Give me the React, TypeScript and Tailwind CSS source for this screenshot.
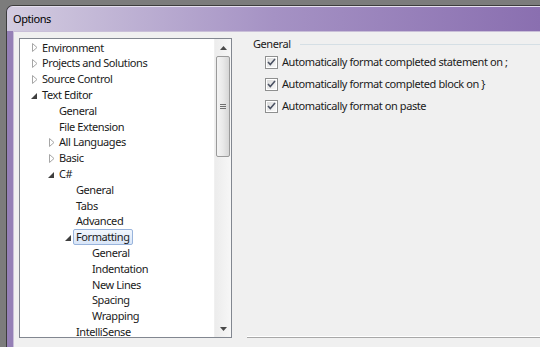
import React from 'react';

type Row = { level: number; label: string; state?: 'open' | 'closed'; selected?: boolean };

const rows: Row[] = [
  { level: 0, label: 'Environment', state: 'closed' },
  { level: 0, label: 'Projects and Solutions', state: 'closed' },
  { level: 0, label: 'Source Control', state: 'closed' },
  { level: 0, label: 'Text Editor', state: 'open' },
  { level: 1, label: 'General' },
  { level: 1, label: 'File Extension' },
  { level: 1, label: 'All Languages', state: 'closed' },
  { level: 1, label: 'Basic', state: 'closed' },
  { level: 1, label: 'C#', state: 'open' },
  { level: 2, label: 'General' },
  { level: 2, label: 'Tabs' },
  { level: 2, label: 'Advanced' },
  { level: 2, label: 'Formatting', state: 'open', selected: true },
  { level: 3, label: 'General' },
  { level: 3, label: 'Indentation' },
  { level: 3, label: 'New Lines' },
  { level: 3, label: 'Spacing' },
  { level: 3, label: 'Wrapping' },
  { level: 2, label: 'IntelliSense' },
];

// arrow column start for each depth
const indent = ['pl-[11px]', 'pl-[28px]', 'pl-[45px]', 'pl-[61px]'];

const options = [
  'Automatically format completed statement on ;',
  'Automatically format completed block on }',
  'Automatically format on paste',
];

function Expander({ state }: { state?: 'open' | 'closed' }) {
  if (state === 'closed') {
    return (
      <svg width="6" height="9" viewBox="0 0 6 9" className="ml-[1px]">
        <path d="M0.5 0.5 L5 4.5 L0.5 8.5 Z" fill="none" stroke="#a6a6a6" strokeWidth="1" />
      </svg>
    );
  }
  if (state === 'open') {
    return (
      <svg width="6" height="6" viewBox="0 0 6 6" className="mt-[1px]">
        <path d="M6 0 L6 6 L0 6 Z" fill="#3f3f3f" />
      </svg>
    );
  }
  return null;
}

function CheckBox() {
  return (
    <div className="w-[13px] h-[13px] border border-[#8e8f8f] bg-white p-px shrink-0">
      <div className="w-full h-full bg-gradient-to-br from-[#dcdcdc] to-[#f8f8f8] flex items-center justify-center">
        <svg width="9" height="8" viewBox="0 0 9 8">
          <path d="M1 4 L3.3 6.5 L8 1" fill="none" stroke="#4b5263" strokeWidth="1.6" />
        </svg>
      </div>
    </div>
  );
}

function ScrollBar() {
  return (
    <div className="w-[17px] shrink-0 flex flex-col bg-gradient-to-r from-[#ececec] to-[#f7f7f7] border-l border-[#f0f0f0]">
      <div className="h-[17px] flex items-center justify-center">
        <svg width="7" height="4" viewBox="0 0 7 4">
          <path d="M0 4 L3.5 0 L7 4 Z" fill="#4a4a4a" />
        </svg>
      </div>
      <div className="flex-1 flex flex-col">
        <div className="h-[101px] mx-[1px] rounded-[2px] border border-[#9a9a9a] bg-gradient-to-r from-[#f4f4f4] via-[#e9e9e9] to-[#d6d6d6] flex flex-col items-center justify-center gap-[1px]">
          <div className="w-[6px] h-px bg-[#707070]" />
          <div className="w-[6px] h-px bg-[#707070]" />
          <div className="w-[6px] h-px bg-[#707070]" />
        </div>
      </div>
      <div className="h-[17px] flex items-center justify-center">
        <svg width="7" height="4" viewBox="0 0 7 4">
          <path d="M0 0 L7 0 L3.5 4 Z" fill="#4a4a4a" />
        </svg>
      </div>
    </div>
  );
}

export default function App() {
  return (
    <div className="w-[540px] h-[347px] overflow-hidden bg-[#7c7c7c] pt-[5px] pl-[6px] flex font-['Noto_Sans',sans-serif] text-[11px] tracking-[-0.42px] text-[#1b1b1b]">
      <div className="flex-1 flex flex-col rounded-tl-[7px] border-t border-l border-[#3d3d3d] bg-[#9580b6] overflow-hidden">
        {/* Title bar */}
        <div className="h-[25px] shrink-0 flex items-center pl-[6px] bg-gradient-to-r from-[#d3cce0] via-[#a592c4] to-[#8a6fb0] border-t border-[#e6e0ef]">
          <span className="text-black">Options</span>
        </div>

        {/* Client area */}
        <div className="flex-1 ml-[6px] flex bg-[#f0f0f0] border-t border-l border-[#c9bfd8] pt-[6px] pl-[5px]">
          {/* Tree */}
          <div className="w-[213px] h-[300px] shrink-0 flex border border-[#828790] bg-white">
            <div className="flex-1 pt-px overflow-hidden">
              {rows.map((r, i) => (
                <div key={i} className={`h-[15.8px] flex items-center ${indent[r.level]}`}>
                  <div className="w-[11px] shrink-0 flex items-center">
                    <Expander state={r.state} />
                  </div>
                  {r.selected ? (
                    <span className="-ml-[3px] px-[2px] h-[16px] flex items-center rounded-[2px] border border-[#99b4dc] bg-gradient-to-b from-[#f1f6fd] to-[#d9e6f8] whitespace-nowrap">
                      {r.label}
                    </span>
                  ) : (
                    <span className="whitespace-nowrap">{r.label}</span>
                  )}
                </div>
              ))}
            </div>
            <ScrollBar />
          </div>

          {/* Right pane */}
          <div className="flex-1 ml-[15px] h-[300px] flex flex-col">
            <div className="flex-1 flex flex-col">
              <div className="h-[13px] flex items-center">
                <span className="pl-[6px] text-[#1b1b1b]">General</span>
                <div className="flex-1 ml-[9px] h-px bg-[#d5dfe5]" />
              </div>
              <div className="flex flex-col">
                {options.map((o) => (
                  <div key={o} className="h-[22px] flex items-center pl-[18px] gap-[4px]">
                    <CheckBox />
                    <span className="whitespace-nowrap">{o}</span>
                  </div>
                ))}
              </div>
            </div>
            <div className="h-px bg-white" />
            <div className="h-px bg-[#a8a8a8]" />
          </div>
        </div>
      </div>
    </div>
  );
}
